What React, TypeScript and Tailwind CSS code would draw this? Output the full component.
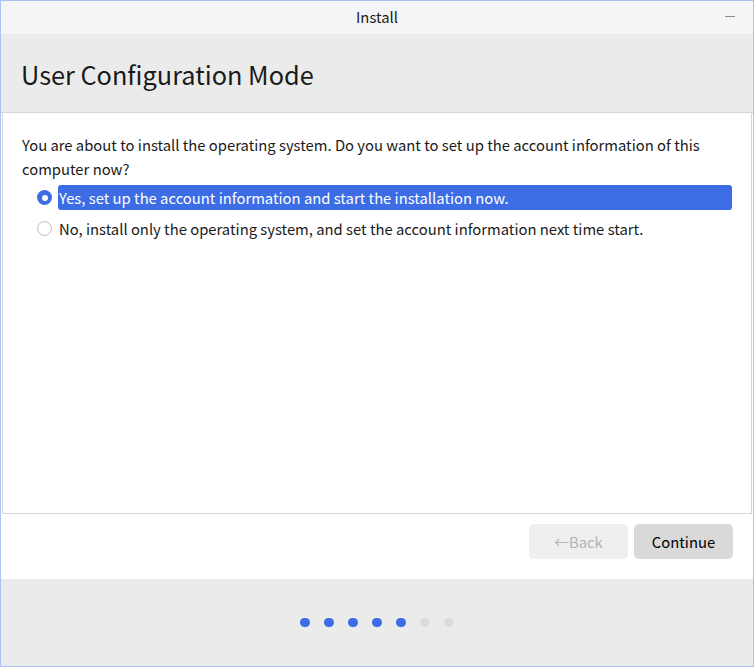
import React, { useState } from 'react';

const options = [
  { id: 'now', label: 'Yes, set up the account information and start the installation now.' },
  { id: 'later', label: 'No, install only the operating system, and set the account information next time start.' },
];

function Radio({ checked }: { checked: boolean }) {
  return checked ? (
    <span className="grid h-[15px] w-[15px] place-items-center rounded-full bg-[#3d6de4]">
      <span className="h-[6px] w-[6px] rounded-full bg-white" />
    </span>
  ) : (
    <span className="h-[15px] w-[15px] rounded-full border border-[#bdbdbd] bg-white" />
  );
}

export default function App() {
  const [mode, setMode] = useState('now');
  const steps = [true, true, true, true, true, false, false];

  return (
    <div
      className="flex h-[667px] w-[754px] flex-col border border-[#abc3f3] bg-white text-[#1a1a1a]"
      style={{ fontFamily: '"Noto Sans CJK SC", "Noto Sans", sans-serif' }}
    >
      {/* title bar */}
      <div className="relative flex h-[33px] shrink-0 items-center justify-center bg-[#f4f5f7] text-[14.8px]">
        <span>Install</span>
        <span className="absolute right-[18px] top-[15px] h-px w-[10px] bg-[#8a8a8a]" />
      </div>

      {/* page header */}
      <div className="flex h-[79px] shrink-0 items-center border-b border-[#d6d6d6] bg-[#ebebeb] pl-[20px] pt-[3px] text-[25.3px]">
        User Configuration Mode
      </div>

      {/* content */}
      <div className="mx-px flex-1 border-x border-b border-[#d6d6d6] pl-[19px] pr-[19px] pt-[20px] text-[14.8px]">
        <p className="leading-[24px]">
          You are about to install the operating system. Do you want to set up the account information of this computer now?
        </p>
        <div className="mt-[4px] flex flex-col gap-[6px]">
          {options.map((o) => {
            const active = mode === o.id;
            return (
              <button
                key={o.id}
                onClick={() => setMode(o.id)}
                className="flex items-center text-left"
              >
                <span className="flex w-[36px] shrink-0 justify-end pr-[6px]">
                  <Radio checked={active} />
                </span>
                <span
                  className={
                    active
                      ? 'h-[25px] flex-1 rounded-[3px] bg-[#3d6de4] pl-px leading-[25px] text-white'
                      : 'h-[25px] flex-1 pl-px leading-[25px]'
                  }
                >
                  {o.label}
                </span>
              </button>
            );
          })}
        </div>
      </div>

      {/* buttons */}
      <div className="flex h-[65px] shrink-0 items-start justify-end gap-[6px] pr-[20px] pt-[10px] text-[14.8px]">
        <button className="h-[35px] w-[99px] rounded-[5px] bg-[#efefef] pt-px text-[#b4b4b4]">←Back</button>
        <button className="h-[35px] w-[99px] rounded-[5px] bg-[#d9d9d9] pt-px text-black">Continue</button>
      </div>

      {/* progress */}
      <div className="flex h-[87px] shrink-0 items-center justify-center gap-[14px] bg-[#ebebeb]">
        {steps.map((done, i) => (
          <span
            key={i}
            className={done ? 'h-[9px] w-[10px] rounded-full bg-[#3d6de4]' : 'h-[9px] w-[10px] rounded-full bg-[#dcdcdc]'}
          />
        ))}
      </div>
    </div>
  );
}
